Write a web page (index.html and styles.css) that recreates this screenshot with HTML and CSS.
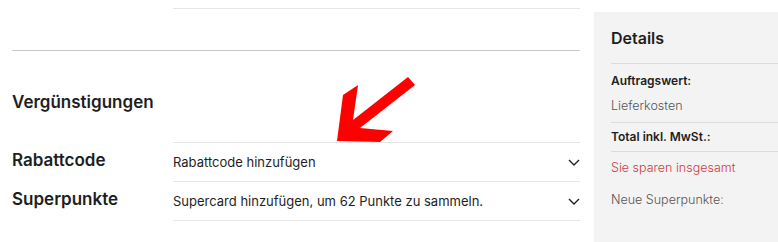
FILE: index.html
```html
<!DOCTYPE html>
<html lang="de">
<head>
    <meta charset="UTF-8">
    <meta name="viewport" content="width=device-width, initial-scale=1.0">
    <title>Warenkorb</title>
    <link rel="stylesheet" href="styles.css">
</head>
<body>
    <div class="page">
        <div class="main">
            <div class="prev-field"></div>
            <div class="divider"></div>
            <h2 class="section-title">Vergünstigungen</h2>
            <div class="perks">
                <div class="perk">
                    <div class="perk-label">Rabattcode</div>
                    <div class="perk-field first">
                        <span>Rabattcode hinzufügen</span>
                        <svg class="chevron" width="12" height="7" viewBox="0 0 12 7"><path d="M1 1l5 5 5-5" fill="none" stroke="#222" stroke-width="1.4"/></svg>
                    </div>
                </div>
                <div class="perk">
                    <div class="perk-label">Superpunkte</div>
                    <div class="perk-field">
                        <span>Supercard hinzufügen, um 62 Punkte zu sammeln.</span>
                        <svg class="chevron" width="12" height="7" viewBox="0 0 12 7"><path d="M1 1l5 5 5-5" fill="none" stroke="#222" stroke-width="1.4"/></svg>
                    </div>
                </div>
            </div>
            <svg class="arrow" width="90" height="75" viewBox="0 0 90 75">
                <polygon points="7,71 13,25 28,15 23,50 78,7 85,15 30,58 63,61 50,72" fill="#ff0000"/>
            </svg>
        </div>
        <aside class="details">
            <h3 class="details-title">Details</h3>
            <div class="details-group">
                <div class="details-row strong">Auftragswert:</div>
                <div class="details-row">Lieferkosten</div>
            </div>
            <div class="details-group total">
                <div class="details-row strong">Total inkl. MwSt.:</div>
            </div>
            <div class="details-group savings">
                <div class="details-row red">Sie sparen insgesamt</div>
                <div class="details-row">Neue Superpunkte:</div>
            </div>
        </aside>
    </div>
</body>
</html>
```

FILE: styles.css
```css
body {
    margin: 0;
    background-color: #fff;
    font-family: Inter, "Noto Sans", sans-serif;
    color: #1e1e1e;
    overflow: hidden;
}
.page {
    display: flex;
    gap: 14px;
    padding-left: 12px;
    width: 900px;
}
.main {
    position: relative;
    width: 568px;
    flex-shrink: 0;
}
.prev-field {
    margin-left: 161px;
    height: 8px;
    border-bottom: 1px solid #e6e6e6;
}
.divider {
    margin-top: 41px;
    border-top: 1px solid #c8c8c8;
}
.section-title {
    margin: 0;
    padding-top: 40px;
    height: 51px;
    font-size: 17px;
    font-weight: 600;
    line-height: 22px;
}
.perk {
    display: flex;
}
.perk-label {
    width: 161px;
    flex-shrink: 0;
    display: flex;
    align-items: center;
    padding-bottom: 5px;
    font-size: 17px;
    font-weight: 600;
}
.perk-field {
    flex: 1;
    height: 38px;
    border-bottom: 1px solid #e6e6e6;
    display: flex;
    align-items: center;
    justify-content: space-between;
    font-size: 13px;
}
.perk-field.first {
    border-top: 1px solid #e6e6e6;
}
.arrow {
    position: absolute;
    left: 318px;
    top: 70px;
}
.details {
    margin-top: 12px;
    width: 240px;
    flex-shrink: 0;
    height: 240px;
    background-color: #f3f3f3;
    padding-left: 17px;
}
.details-title {
    margin: 0;
    padding-top: 15px;
    height: 36px;
    font-size: 16px;
    font-weight: 600;
    line-height: 22px;
    border-bottom: 1px solid #dcdcdc;
}
.details-group {
    display: flex;
    flex-direction: column;
    gap: 9px;
    padding: 9px 0 8px;
}
.details-group.total {
    border-top: 1px solid #dcdcdc;
    padding: 6px 0;
}
.details-group.savings {
    border-top: 1px solid #dcdcdc;
    padding-top: 8px;
    gap: 16px;
}
.details-row {
    font-size: 12.5px;
    line-height: 16px;
    color: #555;
    font-weight: 300;
}
.details-row.strong {
    font-size: 12px;
    color: #1e1e1e;
    font-weight: 600;
}
.details-row.red {
    color: #d33a42;
}
```
